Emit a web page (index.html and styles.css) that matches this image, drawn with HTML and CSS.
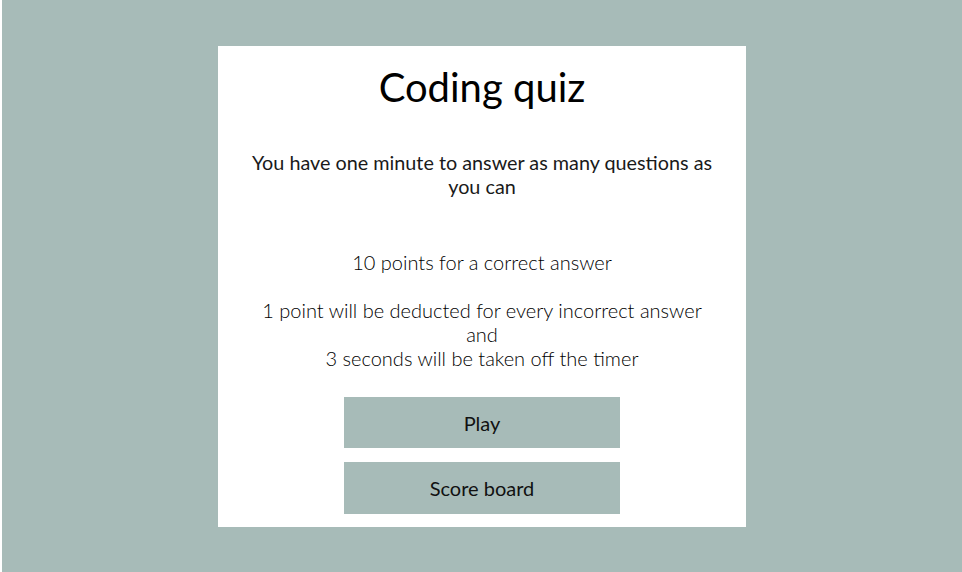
FILE: index.html
```html
<!DOCTYPE html>
<html lang="en">
<head>
<meta charset="utf-8">
<title>Coding quiz</title>
<link rel="stylesheet" href="styles.css">
</head>
<body>
<main class="card">
  <h1 class="title">Coding quiz</h1>
  <p class="intro">You have one minute to answer as many questions as you can</p>
  <p class="rules">10 points for a correct answer<br><br>1 point will be deducted for every incorrect answer<br>and<br>3 seconds will be taken off the timer</p>
  <div class="actions">
    <button class="btn btn-play" type="button">Play</button>
    <button class="btn btn-score" type="button">Score board</button>
  </div>
</main>
</body>
</html>
```
FILE: styles.css
```css
html {
  background: #ffffff;
}
body {
  margin: 0 0 0 2px;
  min-height: 572px;
  box-sizing: border-box;
  padding-top: 46px;
  background: #a7bbb8;
  font-family: Lato, "Open Sans", sans-serif;
  color: #111;
}
.card {
  width: 55%;
  margin: 0 auto;
  background: #ffffff;
  text-align: center;
  padding: 17px 0 13px;
  display: flex;
  flex-direction: column;
  align-items: center;
}
.title {
  margin: 0;
  font-size: 40px;
  font-weight: 400;
  line-height: 48px;
  color: #000;
}
.intro {
  margin: 39px 0 0;
  padding: 0 30px;
  font-size: 19.8px;
  line-height: 24px;
  font-weight: 400;
  color: #1a1a1a;
}
.rules {
  margin: 52px 0 0;
  font-size: 20px;
  line-height: 24px;
  font-weight: 300;
  color: #000;
}
.actions {
  margin-top: 27px;
  display: flex;
  flex-direction: column;
  gap: 14px;
}
.btn {
  width: 276px;
  height: 51px;
  border: none;
  background: #a7bbb8;
  font-family: Lato, "Open Sans", sans-serif;
  font-size: 20px;
  color: #111;
  padding: 0;
}
.btn-score {
  height: 52px;
}
```
